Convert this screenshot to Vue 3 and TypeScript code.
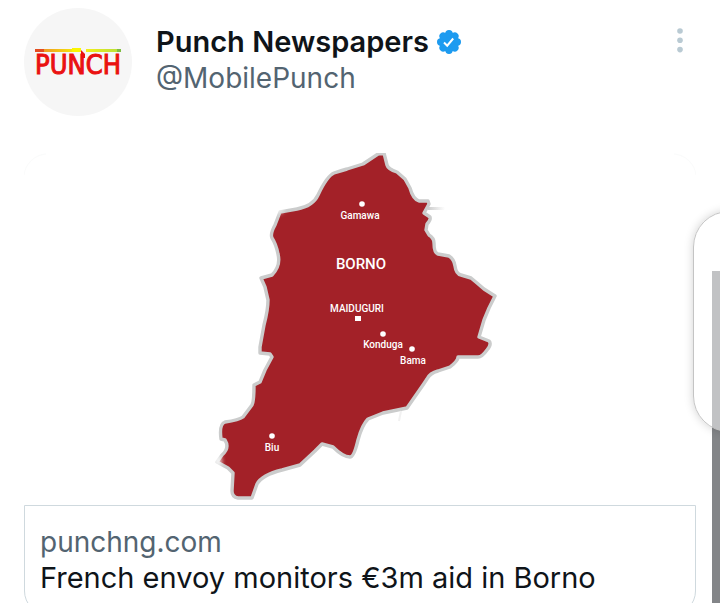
<script setup lang="ts">
interface Place {
  name: string
  x: number
  y: number
  size: 'small' | 'state'
}

interface Marker {
  x: number
  y: number
}

const places: Place[] = [
  { name: 'Gamawa', x: 360, y: 219, size: 'small' },
  { name: 'BORNO', x: 361, y: 269, size: 'state' },
  { name: 'MAIDUGURI', x: 357, y: 312, size: 'small' },
  { name: 'Konduga', x: 383, y: 348, size: 'small' },
  { name: 'Bama', x: 413, y: 364, size: 'small' },
  { name: 'Biu', x: 272, y: 451, size: 'small' },
]

const markers: Marker[] = [
  { x: 362, y: 204 },
  { x: 383, y: 334 },
  { x: 412, y: 349 },
  { x: 272, y: 436 },
]

const lobes: number[] = [0, 45, 90, 135, 180, 225, 270, 315]

const outline =
  'M378 154 L384 153 L387 165 Q388 169 397 172 L405 179 L410 188 Q413 199 419 201 L428 201 L429 204 L424 213 L430 217 Q431 220 427 224 L426 230 L429 235 Q434 238 434 243 Q434 253 438 254 L449 256 Q454 259 455 266 Q456 274 461 275 L471 278 L477 283 L484 289 L495 296 L489 308 L484 320 L479 337 L489 341 Q492 344 487 350 Q482 357 478 357 L458 357 Q458 361 450 367 L438 371 Q430 373 427 379 L423 385 L407 408 L383 413 L368 419 Q362 425 358 440 Q354 457 350 457 Q343 457 333 447 L322 444 L315 451 L300 465 L282 470 Q262 475 257 484 L252 498 L238 498 Q232 497 232 491 L233 473 L228 468 L217 462 L222 455 Q230 448 225 440 L221 439 Q219 424 225 422 Q239 420 243 417 L252 405 Q254 402 254 385 L260 382 L265 370 L272 357 L270 354 L260 353 L260 347 L264 325 Q268 310 268 300 L265 287 L261 278 L272 275 Q281 266 278 254 Q276 244 272 238 Q270 234 275 225 L280 212 L297 209 Q313 206 318 195 Q327 176 334 173 Q340 171 347 169 L363 164 Z'
</script>

<template>
  <main class="page">
    <article class="tweet">
      <header class="header">
        <a class="avatar" href="#" aria-label="PUNCH">
          <svg viewBox="0 0 108 108" aria-hidden="true">
            <defs>
              <linearGradient id="bar-left">
                <stop offset="0" stop-color="#f09a22" />
                <stop offset="1" stop-color="#f5e60c" />
              </linearGradient>
              <linearGradient id="bar-right">
                <stop offset="0" stop-color="#f4ee18" />
                <stop offset="1" stop-color="#b9e03a" />
              </linearGradient>
            </defs>
            <rect x="11" y="41" width="9" height="3" fill="#e34d20" />
            <rect x="20" y="41" width="29" height="3" fill="url(#bar-left)" />
            <rect x="48" y="40" width="9" height="4" fill="#fbf500" />
            <rect x="62" y="41" width="32" height="3" fill="url(#bar-right)" />
            <rect x="93" y="41" width="4" height="3" fill="#7fbd42" />
            <path d="M57 42 L61 46 L61 50 L57 50 Z" fill="#ea1111" />
            <text class="logo-text" x="54" y="66">PUNCH</text>
          </svg>
        </a>
        <div class="names">
          <div class="name-row">
            <span class="name">Punch Newspapers</span>
            <svg class="verified" viewBox="0 0 24 24" role="img" aria-label="Verified">
              <g fill="#1d9bf0">
                <circle cx="12" cy="12" r="10" />
                <circle
                  v-for="angle in lobes"
                  :key="angle"
                  cx="12"
                  cy="3.7"
                  r="3.7"
                  :transform="`rotate(${angle} 12 12)`"
                />
              </g>
              <path d="M7 12.5 L10.2 15.7 L16.2 8.5" fill="none" stroke="#fff" stroke-width="2" />
            </svg>
          </div>
          <span class="handle">@MobilePunch</span>
        </div>
        <button class="more" type="button" aria-label="More">
          <svg viewBox="0 0 8 26" aria-hidden="true">
            <g fill="#b9cad3">
              <circle cx="4" cy="4" r="2.8" />
              <circle cx="4" cy="13.3" r="2.8" />
              <circle cx="4" cy="22.6" r="2.8" />
            </g>
          </svg>
        </button>
      </header>

      <a class="card" href="#">
        <svg class="map" viewBox="24 153 672 352" role="img" aria-label="Borno">
          <defs>
            <filter id="soft" x="-50%" y="-50%" width="200%" height="200%">
              <feGaussianBlur stdDeviation="2" />
            </filter>
            <linearGradient id="trail">
              <stop offset="0" stop-color="#ccc" />
              <stop offset="1" stop-color="#fff" />
            </linearGradient>
          </defs>
          <path d="M24 175 A24 24 0 0 1 46 154 M674 154 A24 24 0 0 1 696 175" fill="none" stroke="#fafbfb" />
          <path :d="outline" fill="#a32128" stroke="#cbcccc" stroke-width="3.4" stroke-linejoin="round" />
          <rect x="428" y="207" width="17" height="3" fill="url(#trail)" />
          <ellipse cx="279" cy="209" rx="5" ry="5" fill="#fff" opacity="0.6" filter="url(#soft)" />
          <ellipse cx="218" cy="461" rx="4" ry="6" fill="#fff" opacity="0.8" filter="url(#soft)" />
          <path d="M401 411 L399 421" stroke="#f1f1f1" stroke-width="2" />
          <circle v-for="m in markers" :key="`${m.x}-${m.y}`" :cx="m.x" :cy="m.y" r="2.8" fill="#fff" />
          <rect x="355" y="316" width="6" height="5" fill="#fff" />
          <text
            v-for="p in places"
            :key="p.name"
            :x="p.x"
            :y="p.y"
            :class="['place', p.size]"
          >{{ p.name }}</text>
        </svg>
        <div class="summary">
          <span class="domain">punchng.com</span>
          <span class="title">French envoy monitors €3m aid in Borno</span>
        </div>
      </a>
    </article>

    <div class="scroll-strip"></div>
    <div class="edge-panel"></div>
  </main>
</template>

<style>
body {
  margin: 0;
  background: #fff;
}
</style>

<style scoped>
.page {
  position: relative;
  height: 100vh;
  overflow: hidden;
  background: #fff;
  color: #0f1419;
  font-family: Inter, "Liberation Sans", sans-serif;
  font-size: 29px;
  line-height: 36px;
}

.tweet {
  padding: 8px 24px 0;
}

.header {
  display: flex;
  align-items: flex-start;
  gap: 24px;
}

.avatar {
  flex: none;
  width: 108px;
  height: 108px;
  border-radius: 50%;
  background: #f6f6f6;
}

.avatar svg,
.verified,
.more svg,
.map {
  display: block;
}

.logo-text {
  fill: #ea1111;
  font-family: "DejaVu Sans Condensed", "DejaVu Sans", sans-serif;
  font-size: 27px;
  font-weight: 400;
  stroke: #ea1111;
  stroke-width: 1;
  text-anchor: middle;
}

.names {
  flex: 1;
  padding-top: 16px;
}

.name-row {
  display: flex;
  align-items: center;
  gap: 8px;
}

.name {
  font-weight: 600;
}

.verified {
  width: 24px;
  height: 24px;
}

.handle,
.domain {
  color: #536471;
  font-size: 28px;
}

.more {
  margin: 19px 12px 0 0;
  padding: 0;
  border: 0;
  background: none;
}

.more svg {
  width: 8px;
  height: 26px;
}

.card {
  display: block;
  margin-top: 37px;
  color: inherit;
  text-decoration: none;
}

.map {
  width: 100%;
}

.place {
  fill: #fff;
  font-family: Roboto, "Open Sans", sans-serif;
  font-weight: 500;
  text-anchor: middle;
}

.small {
  font-size: 10px;
}

.state {
  font-size: 15px;
}

.summary {
  display: flex;
  flex-direction: column;
  padding: 18px 15px;
  border: 1px solid #cfd9de;
  border-radius: 0 0 24px 24px;
}

.scroll-strip {
  position: absolute;
  top: 271px;
  right: 0;
  bottom: 0;
  width: 8px;
  background: #838588;
}

.edge-panel {
  position: absolute;
  top: 211px;
  right: -46px;
  width: 71px;
  height: 219px;
  border: 1px solid #c4c4c4;
  border-radius: 36px;
  background: rgba(255, 255, 255, 0.5);
  box-shadow: 0 0 10px rgba(0, 0, 0, 0.18);
}
</style>
